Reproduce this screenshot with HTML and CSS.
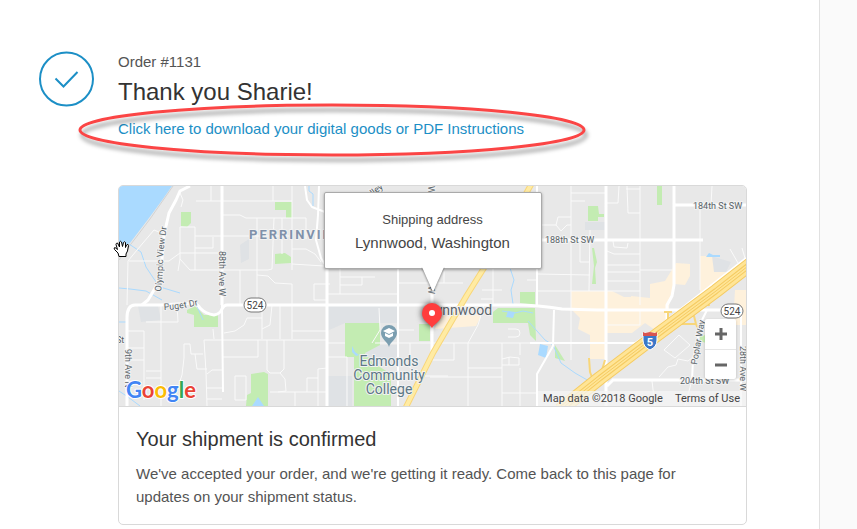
FILE: index.html
```html
<!DOCTYPE html>
<html lang="en">
<head>
<meta charset="utf-8">
<meta name="viewport" content="width=device-width, initial-scale=1">
<title>Order #1131</title>
<link rel="stylesheet" href="styles.css">
</head>
<body>
<div class="page">
  <main class="main">
    <header class="order">
      <svg class="order-icon" viewBox="0 0 56 56" aria-hidden="true">
        <circle cx="28.500" cy="28" r="26.500"/>
        <path d="M17.500 27.500l8 8L39.500 21"/>
      </svg>
      <div class="order-text">
        <p class="order-number">Order #1131</p>
        <h1>Thank you Sharie!</h1>
        <p class="download">
          <a href="#download">Click here to download your digital goods or PDF Instructions</a>
          <svg class="callout" viewBox="0 0 512 66" aria-hidden="true"><ellipse cx="254" cy="28" rx="252" ry="25"/></svg>
        </p>
      </div>
    </header>

    <section class="card">
      <div class="map">
        <svg class="map-art" viewBox="119 186 627 220" preserveAspectRatio="xMidYMid slice" role="img" aria-label="Map of Lynnwood, Washington">
          <path class="water" d="M119 186H172L163 199 149 218 130 243 119 248z"/>
          <path class="coast" d="M173 186L150 219 131 244 119 260"/>
          <g class="zone">
            <path d="M240 245l9-6v20l-8 4zM138 306h20l3 14-20 2zM366 345h31v19h-31zM328 376h24v30h-24zM327 305h70v18h-52l-18 8zM585 222h21v8h-21zM711 256l20 6-5 10h-15z"/>
          </g>
          <g class="park">
            <path d="M181 212h10v11l-4 4-6-1zM275 202h17v16h-6v-8h-11zM275 254l10-1 6 4v6l-16 1zM187 310l8-4 9 9h14v12h-24v-12l-7-2zM251 374l13-2 4 2v32h-22l1-11 4-2z"/>
            <path d="M345 323h35v22l-15 8 7 9 19 12v32h-37v-49h-9zM419 324h11v17h-11zM520 292h15v13l-15-2zM493 312l5-4h37l1 33-6-6-2-12h-35zM588 206h10l1 8h5v3h-6v4h-10zM657 186h5v19h-5zM592 248h2l3 14-2 6 1 16h-4l2-18zM555 345l10 16-10-3zM700 336l6-1v8l-6-2z"/>
          </g>
          <g class="shops">
            <path d="M571 291h41l12 6h7v-1l19 2v-14l15-3 11-18 14 1v12l-5 9-11-1-4 14-2 20-13 12-10-7-13 10h-27v26h-15v-24l-12-6 2-11-9-9z"/>
            <path d="M700 256h12l2 16h14l-6 8-22 14zM735 290h11v35h-13zM440 316l42-2-6 12-41 3z"/>
          </g>
          <path class="water" d="M258 397l6 9h-12zM706 257l3-4 4 2h7v2zM540 344l8 2-2 12-8-3zM508 311l7 1-2 6-7-1zM352 346l3 6 4 3-3 1-4-4z"/>
          <g class="creek">
            <path d="M129 244l12 8 5 15 8 12 6 8 20 6M119 288l11 1 16 2 16 9M119 322h8M119 391l9 6 12 9M196 304l7 16M309 186v5l4 3v12M510 268l4 12-3 10 2 14M502 311l13 2 8-2 10 2M528 321l9 10 8 9 8 5 8 18 14 10 14 8 4 8"/>
          </g>
          <g class="minor">
            <path d="M180 193l3 7-2 7M196 201h96M211 186v15M273 186v15M292 186v84M222 215h18l6 3h60v21M257 218v52M274 218l-2 51-4 1M282 218v36M180 227h15v43M180 227v32l10 11h78M180 259l-2 12M195 236h97M195 248h18v-11M129 261h40l11-8h42M164 234l-10-4-17 20-9 11-1 44"/>
            <path d="M240 270v35M257 270v35M257 275l11 1 7 7 17 1v21M292 249h14l9 5 6 8M292 264l32 2M330 284h-16v16h13M146 322h32l-1-17M161 305v101M127 331h17v69M127 348h17M127 360h17M146 371h15M146 378h15M213 329l1 10M224 333l11-2 9-6 3-7h15M262 305v34M262 329l8-4 2-20M280 305v34M292 305v34M292 331h35M204 340h123M204 340l2 32 1 34"/>
            <path d="M203 354h-12l-1-10h-6v14l-2 17-3 9M195 354l2 15h10M207 374l5-4h10M207 388h15M207 399h15M222 357h36v-17M267 340v30l3 3h10l4-4v-29M280 373l5 6 1 12-8 1M235 376h11v24h-11zM270 392h57M295 406v-14M307 392v-14h11M327 368l-9 1v37"/>
            <path d="M340 268v26h57M340 277h35M362 277v8h-22M397 283h66M444 283v-15M327 294h13M375 343h166M379 308l1 22-8 13M398 330h16M410 343v25M430 360h24v-17M468 343v63M502 343v63M468 368h34M430 377h72M520 343v12M502 359l8-2 9 1v7h-17M509 357v8M484 305l-6 20-10 18M398 376h50M327 357h20v49M345 343h-18M520 406v-38M502 393h35M508 329h8a4 4 0 0 1 0 8h-8M502 290h-20M493 305v-37M481 299h12"/>
            <path d="M571 186v174M640 186v119M700 205v85M571 193h35M571 201h14M541 225h15l5 6 6-6h4M556 225l2-8h13M607 203h11l1-17M627 186l1 27h12M626 189h14M590 230l-1 61M580 240v22h10M613 241l1 6 13 1 1-5M607 251l7 3h26M607 265h33M607 272h33M607 281h33M640 270h32M537 274l53 1M537 291h103M537 280h-10M712 186l-1 19M730 249l8 14M742 248l3 10M664 350l15-15 11 10-15 13zM659 377l9-10 8-2 2-6 10 2 5-4M692 380l-7 26M652 381l3 25M607 325h33v-15"/>
          </g>
          <g class="medium">
            <path d="M537 186v119M222 305l1 87M554 310l-1 36-16 28v32M707 310l-5 10-6 25-3 15-1 20M741 310v96"/>
            <path d="M305 186l2 14 5 7 13 5M319 186l-1 29-2 25 5 18 6 10M398 268v138M530 343h105l15-10 96-75"/>
          </g>
          <g class="major">
            <path d="M190 186l-10 5-4 9-7 13-5 22-3 35-4 15-9 15-6 5M222 186v119M327 268v138M432 186v168M606 186v220M674 186v99l-2 11-5 9v17M542 240h161M675 205h71M612 380h134M613 380l-6 6"/>
            <path d="M127 406v-88q0-13 8-13h25l35-2q4 3 5 5 6 6 14 7 6-1 8-6 2-4 5-4h290q20 0 45 4l35 1h146"/>
          </g>
          <g class="ramp"><path d="M589 358l1 14 4 11M605 360l-3 10-8 12M668 311v11M664 312h8M688 316h6l2 8 2 5M676 324h20M708 300l1 6"/></g>
          <path class="highway-edge" d="M532 183l-48 85-17 27-34 58-28 56"/>
          <path class="highway" d="M532 183l-48 85-17 27-34 58-28 56"/>
          <g class="freeway">
            <path class="f-edge" d="M752 263l-36 28-66 49-50 38-40 32"/>
            <path class="f-fill" d="M752 263l-36 28-66 49-50 38-40 32"/>
            <path class="f-mid" d="M752 263l-36 28-66 49-50 38-40 32"/>
            <path class="f-center" d="M752 263l-36 28-66 49-50 38-40 32"/>
            <path class="f-line" d="M752 263l-36 28-66 49-50 38-40 32"/>
          </g>

          <defs>
            <path id="olympic" d="M161 292Q163 273 163 262T167 226"/>
            <path id="puget" d="M164 310Q183 309 203 304"/>
          </defs>
          <g class="road-label">
            <text><textPath href="#olympic">Olympic View Dr</textPath></text>
            <text><textPath href="#puget">Puget Dr</textPath></text>
            <text transform="translate(219 251) rotate(90)">88th Ave W</text>
            <text transform="translate(125 349) rotate(90)">9th Ave N</text>
            <text x="116" y="343">St</text>
            <text transform="translate(373 196) rotate(-38)">lley</text>
            <text transform="translate(428 186) rotate(90)">W</text>
            <text transform="translate(428 286) rotate(90)">W</text>
            <text x="545" y="243">188th St SW</text>
            <text x="693" y="209">184th St SW</text>
            <text x="680" y="384">204th St SW</text>
            <text transform="translate(697 365) rotate(-80)">Poplar Way</text>
            <text transform="translate(740 346) rotate(90)">28th Ave W</text>
          </g>
          <text class="district" x="249" y="239">PERRINVILLE</text>
          <text class="city" x="429" y="315">Lynnwood</text>
          <g class="campus">
            <text x="389" y="366">Edmonds</text>
            <text x="389" y="380">Community</text>
            <text x="389" y="394">College</text>
          </g>
          <path class="campus-pin" d="M389 347c-1-5-8-8-8-14a8 8 0 0 1 16 0c0 6-7 9-8 14z"/>
          <path class="campus-cap" d="M389 328l-6 3 6 3 6-3zM385 333v3l4 2 4-2v-3l-4 2z"/>
          <g class="route">
            <rect x="244" y="298" width="22" height="14" rx="7"/><text x="255" y="309">524</text>
            <rect x="721" y="304" width="22" height="14" rx="7"/><text x="732" y="315">524</text>
          </g>
          <path class="shield" d="M643 333h14v7q0 7-7 10-7-3-7-10z"/>
          <path class="shield-top" d="M643 332l2 1 5-1 5 1 2-1v4h-14z"/>
          <text class="shield-text" x="650" y="346">5</text>
          <text class="google" x="126" y="398"><tspan class="g-blue">G</tspan><tspan class="g-red">o</tspan><tspan class="g-yellow">o</tspan><tspan class="g-blue">g</tspan><tspan class="g-green">l</tspan><tspan class="g-red">e</tspan></text>
          <path class="pin" d="M432 328c-2-4-10-7-10-15a10 10 0 0 1 20 0c0 8-8 11-10 15z"/>
          <circle class="pin-dot" cx="432" cy="313" r="3"/>
        </svg>
        <div class="address">
          <p class="address-title">Shipping address</p>
          <p class="address-place">Lynnwood, Washington</p>
          <svg class="address-tail" viewBox="0 0 24 28" aria-hidden="true"><path d="M1 0l11 25L23 0z"/></svg>
        </div>
        <div class="zoom">
          <button type="button" aria-label="Zoom in"><svg viewBox="0 0 12 12"><path d="M0 6h12M6 0v12"/></svg></button>
          <button type="button" aria-label="Zoom out"><svg viewBox="0 0 12 12"><path d="M0 6h12"/></svg></button>
        </div>
        <div class="attribution"><span>Map data ©2018 Google</span><a href="#terms">Terms of Use</a></div>
        <svg class="hand" viewBox="0 0 18 18" aria-hidden="true"><path d="M6 16.500L5 13 1.500 9.500Q.500 7.500 2 7.500L4.500 9.500 3 4.500Q3 3 4.500 3L6.500 7 6.500 2Q7.500.500 8.500 2L9.500 6.500 10.500 2.500Q11.500 1 12.500 2.500L12.500 7.500 13.500 5Q15.500 3.500 15.500 5.500L14.500 11 13 14V16.500z"/></svg>
      </div>
      <div class="card-body">
        <h2>Your shipment is confirmed</h2>
        <p>We've accepted your order, and we're getting it ready. Come back to this page for updates on your shipment status.</p>
      </div>
    </section>
  </main>
  <aside class="sidebar" aria-label="Order summary"></aside>
</div>
</body>
</html>
```
FILE: styles.css
```css
* { box-sizing: border-box; }
body {
  margin: 0;
  background: #fff;
  color: #545454;
  font: 15px/23px "Liberation Sans", Arial, sans-serif;
}
p, h1, h2 { margin: 0; }
a { color: #1c8fc6; text-decoration: none; }
.page { display: flex; min-height: 100vh; }
.main { flex: 1; padding: 51px 72px 4px 38px; }
.sidebar { width: 38px; background: #fafafa; border-left: 1px solid #e1e1e1; }

.order { display: flex; gap: 24px; }
.order-icon { flex: none; width: 56px; height: 56px; fill: none; stroke: #1c8fc6; stroke-width: 2; }
.order-number { line-height: 22px; }
h1 { color: #333; font-size: 24px; font-weight: 400; line-height: 38px; }
.download { position: relative; padding-top: 6px; }
.callout { position: absolute; left: -40px; top: -9px; width: 512px; height: 66px; pointer-events: none; overflow: visible; }
.callout ellipse { fill: none; stroke: #fb4545; stroke-width: 3; filter: drop-shadow(2px 5px 2px rgba(0, 0, 0, .4)); }

.card { margin: 45px 0 0 80px; border: 1px solid #d9d9d9; border-radius: 5px; }
.card-body { padding: 19px 17px 16px; }
h2 { color: #333; font-size: 20px; font-weight: 400; line-height: 26px; margin-bottom: 10px; }

.map { position: relative; height: 221px; border-bottom: 1px solid #d9d9d9; }
.map-art { display: block; width: 100%; height: 100%; background: #e8e8e8; border-radius: 4px 4px 0 0; }
.water { fill: #aadaff; }
.coast { fill: none; stroke: #d2d2d2; stroke-width: 1; }
.zone { fill: #dfe2e5; }
.park { fill: #c3ecb2; }
.shops { fill: #fef1dc; }
.creek, .minor, .medium, .major, .ramp, .highway, .highway-edge, .freeway { fill: none; stroke-linejoin: round; }
.creek { stroke: #aadaff; stroke-width: 1; }
.minor { stroke: #fafafa; stroke-width: 1; }
.medium { stroke: #fff; stroke-width: 2; }
.major { stroke: #fff; stroke-width: 3; }
.ramp { stroke: #f8d679; stroke-width: 2; }
.highway-edge { stroke: #f8d679; stroke-width: 6; }
.highway { stroke: #ffeba3; stroke-width: 4; }
.f-edge { stroke: #f5cb62; stroke-width: 14; }
.f-fill { stroke: #ffe597; stroke-width: 12; }
.f-mid { stroke: #f5cb62; stroke-width: 6; }
.f-center { stroke: #ffe597; stroke-width: 4; }
.f-line { stroke: #f5cb62; stroke-width: 1; }

.map-art text { font-family: Roboto, sans-serif; paint-order: stroke; stroke: #f2f2f2; stroke-width: 2; stroke-linejoin: round; }
.road-label { fill: #586268; font-size: 9px; }
.map-art .district { fill: #8091aa; font-size: 13px; font-weight: 700; letter-spacing: 2px; }
.city { fill: #5c656b; font-size: 14px; }
.campus { fill: #5d7886; font-size: 14px; text-anchor: middle; }
.campus-pin { fill: #7b9eb0; }
.campus-cap { fill: #fff; }
.route rect { fill: #fff; stroke: #777; stroke-width: 1; }
.route text { fill: #444; stroke: none; font-size: 10px; text-anchor: middle; }
.shield { fill: #3c78c8; stroke: #fff; stroke-width: 1; }
.shield-top { fill: #d9544f; }
.map-art .shield-text { fill: #fff; stroke: none; font-size: 11px; font-weight: 700; text-anchor: middle; }
.map-art .google { font-family: Lato, sans-serif; font-size: 22px; font-weight: 700; stroke: #fff; }
.g-blue { fill: #4285f4; }
.g-red { fill: #ea4335; }
.g-yellow { fill: #fbbc05; }
.g-green { fill: #34a853; }
.pin { fill: #ff3d3d; filter: drop-shadow(0 0 3px rgba(0, 0, 0, .8)); }
.pin-dot { fill: #fff; }

.address {
  position: absolute; left: 50%; top: 6px; width: 218px; margin-left: -109px; padding: 15px 8px 14px;
  background: #fff; border: 1px solid #aaa; border-radius: 2px; box-shadow: 0 1px 3px rgba(0, 0, 0, .35);
  color: #454545; text-align: center;
}
.address-title { font-size: 13px; }
.address-tail { position: absolute; left: 96px; top: 74px; width: 24px; height: 28px; }
.address-tail path { fill: #fff; filter: drop-shadow(0 1px 1px rgba(0, 0, 0, .5)); }

.zoom { position: absolute; right: 10px; top: 133px; width: 31px; background: #fff; border-radius: 2px; box-shadow: 0 1px 3px rgba(0, 0, 0, .2); }
.zoom button { display: flex; align-items: center; justify-content: center; width: 100%; height: 30px; padding: 0; border: 0; background: none; }
.zoom button + button { border-top: 1px solid #e6e6e6; }
.zoom svg { width: 12px; height: 12px; stroke: #666; stroke-width: 3; }
.attribution {
  position: absolute; right: 0; bottom: 0; display: flex; gap: 12px; padding: 0 6px 0 5px;
  background: rgba(245, 245, 245, .75); color: #444; font: 11px/15px Roboto, sans-serif;
}
.attribution a { color: inherit; }
.hand { position: absolute; left: -6px; top: 54px; width: 18px; height: 18px; fill: #fff; stroke: #000; stroke-width: 1; }
```
